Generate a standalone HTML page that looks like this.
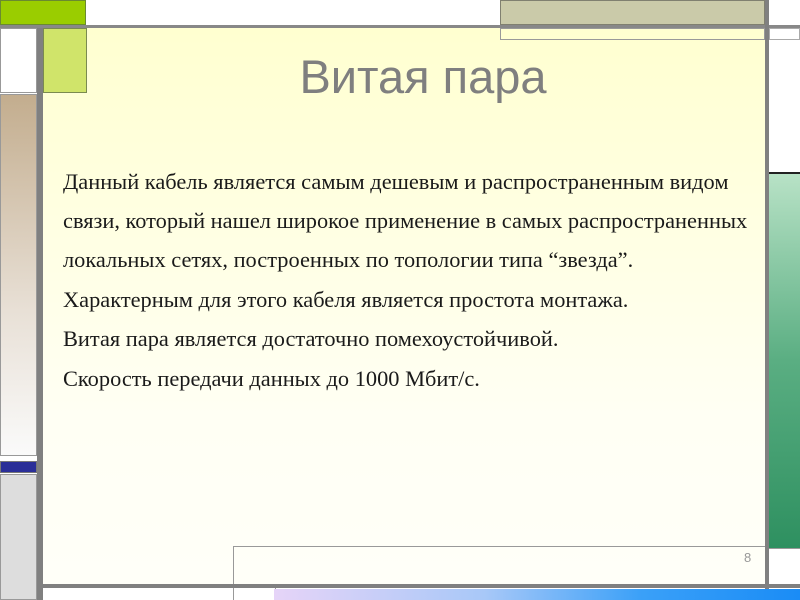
<!DOCTYPE html>
<html><head><meta charset="utf-8"><style>
*{margin:0;padding:0}
body{width:800px;height:600px;position:relative;overflow:hidden;background:#fff;font-family:"Liberation Serif",serif}
div{position:absolute}
.l{font-family:"Liberation Serif",serif;font-size:22.4px;color:#1a1a1a;left:63px;white-space:nowrap;line-height:1}
</style></head><body>
<div style="left:43px;top:28px;width:722px;height:556px;background:linear-gradient(#ffffd0,#fffff4 70%,#fffff8)"></div>
<div style="left:0;top:0;width:86px;height:25px;background:#9acd00;border:1px solid #6a8a30;box-sizing:border-box"></div>
<div style="left:500px;top:0;width:265px;height:25px;background:#cacaa9;border:1px solid #808070;box-sizing:border-box"></div>
<div style="left:0;top:25px;width:800px;height:3px;background:#888"></div>
<div style="left:500px;top:28px;width:265px;height:12px;border:1px solid #999;box-sizing:border-box"></div>
<div style="left:43px;top:28px;width:44px;height:65px;background:#d0e46a;border:1px solid #7a8a50;box-sizing:border-box"></div>
<div style="left:0;top:28px;width:37px;height:65px;background:#fff;border:1px solid #999;box-sizing:border-box"></div>
<div style="left:0;top:94px;width:37px;height:362px;background:linear-gradient(#c3ad8e,#e8e0d6 60%,#fafafa);border:1px solid #999;box-sizing:border-box"></div>
<div style="left:0;top:461px;width:37px;height:12px;background:#2a2e98;border:1px solid #777;box-sizing:border-box"></div>
<div style="left:0;top:474px;width:37px;height:126px;background:#ddd;border:1px solid #999;box-sizing:border-box"></div>
<div style="left:37px;top:28px;width:6px;height:572px;background:#808080"></div>
<div style="left:765px;top:0;width:4px;height:600px;background:#808080"></div>
<div style="left:769px;top:28px;width:31px;height:12px;border:1px solid #aaa;box-sizing:border-box;background:#fff"></div>
<div style="left:769px;top:172px;width:31px;height:376px;background:linear-gradient(#b8e2c6,#5aae82 50%,#2e9060);border-top:2px solid #222;box-sizing:border-box"></div>
<div style="left:769px;top:548px;width:31px;height:1px;background:#999"></div>
<div style="left:233px;top:546px;width:532px;height:39px;border:1px solid #999;border-right:none;box-sizing:border-box"></div>
<div style="left:43px;top:584px;width:757px;height:4px;background:#808080"></div>
<div style="left:233px;top:588px;width:41px;height:12px;border-left:1px solid #999;border-right:1px solid #999;background:#fff"></div>
<div style="left:274px;top:589px;width:526px;height:11px;background:linear-gradient(90deg,#e6d4f8,#a8c8f8 40%,#3aa0f8 70%,#1a8cf6)"></div>
<div style="left:744px;top:550px;font-family:'Liberation Sans',sans-serif;font-size:13px;color:#999">8</div>
<div style="left:43px;width:760px;top:50px;text-align:center;font-family:'Liberation Sans',sans-serif;font-size:47px;color:#7f7f7f;line-height:54px">Витая пара</div>
<div class="l" style="top:171px">Данный кабель является самым дешевым и распространенным видом</div>
<div class="l" style="top:210px">связи, который нашел широкое применение в самых распространенных</div>
<div class="l" style="top:249px">локальных сетях, построенных по топологии типа “звезда”.</div>
<div class="l" style="top:289px">Характерным для этого кабеля является простота монтажа.</div>
<div class="l" style="top:328px">Витая пара является достаточно помехоустойчивой.</div>
<div class="l" style="top:368px">Скорость передачи данных до 1000 Мбит/с.</div>
</body></html>
